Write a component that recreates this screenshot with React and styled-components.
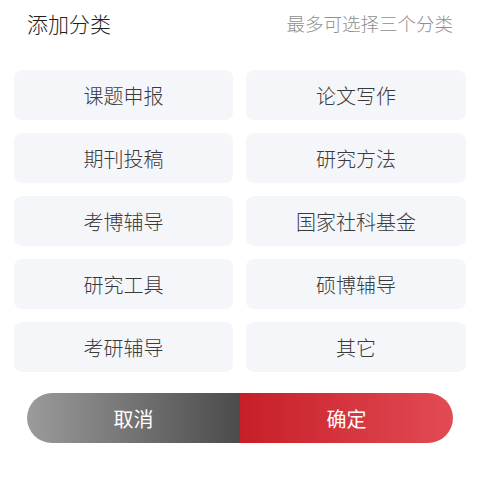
import React, { useState } from 'react';
import styled, { createGlobalStyle, css } from 'styled-components';

const GlobalStyle = createGlobalStyle`
	html, body {
		margin: 0;
		padding: 0;
		background: #fff;
		font-family: "Noto Sans CJK SC", "Noto Sans", sans-serif;
	}
`;

const Container = styled.div`
	width: 480px;
	height: 477px;
	box-sizing: border-box;
	padding: 6px 14px 0;
	display: flex;
	flex-direction: column;
`;
const Header = styled.header`
	display: flex;
	align-items: center;
	justify-content: space-between;
	height: 34px;
	padding: 0 13px;
`;
const Title = styled.h2`
	margin: 0;
	font-size: 21px;
	font-weight: 300;
	color: #222;
`;
const Hint = styled.span`
	font-size: 18.5px;
	font-weight: 300;
	color: #8f8f8f;
`;
const Grid = styled.div`
	display: grid;
	grid-template-columns: 219px 220px;
	column-gap: 13px;
	row-gap: 13px;
	margin-top: 30px;
`;
const Tag = styled.button`
	height: 50px;
	border: none;
	border-radius: 8px;
	background: #f5f6fa;
	font-family: inherit;
	font-size: 20px;
	font-weight: 300;
	color: #3a3a3a;
	cursor: pointer;
	padding: 0;
	${(props) =>
		props.active &&
		css`
			color: #c8202a;
			background: #fbeaeb;
		`}
`;
const Actions = styled.div`
	display: flex;
	margin: 21px 13px 0;
	height: 50px;
	border-radius: 25px;
	overflow: hidden;
`;
const ActionButton = styled.button`
	flex: 1;
	border: none;
	font-family: inherit;
	font-size: 20px;
	color: #fff;
	cursor: pointer;
	background: ${(props) =>
		props.primary
			? 'linear-gradient(90deg, #c71f28, #e24b55)'
			: 'linear-gradient(90deg, #9b9b9b, #4b4b4b)'};
`;

const categories = ['课题申报', '论文写作', '期刊投稿', '研究方法', '考博辅导', '国家社科基金', '研究工具', '硕博辅导', '考研辅导', '其它'];

function App() {
	const [selected, setSelected] = useState([]);
	const toggle = (name) => {
		if (selected.includes(name)) setSelected(selected.filter((s) => s !== name));
		else if (selected.length < 3) setSelected([...selected, name]);
	};
	return (
		<Container>
			<GlobalStyle />
			<Header>
				<Title>添加分类</Title>
				<Hint>最多可选择三个分类</Hint>
			</Header>
			<Grid>
				{categories.map((c) => (
					<Tag key={c} active={selected.includes(c)} onClick={() => toggle(c)}>
						{c}
					</Tag>
				))}
			</Grid>
			<Actions>
				<ActionButton>取消</ActionButton>
				<ActionButton primary>确定</ActionButton>
			</Actions>
		</Container>
	);
}

export default App;
